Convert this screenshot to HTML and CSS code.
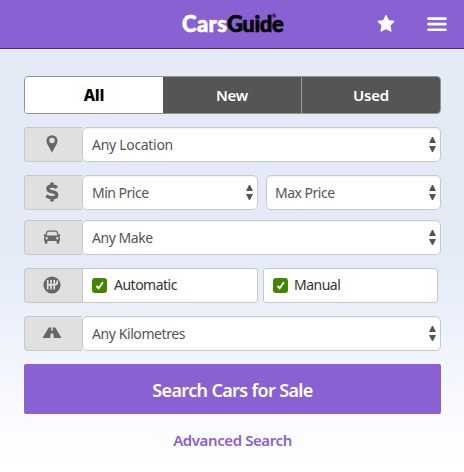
FILE: index.html
```html
<!DOCTYPE html>
<html lang="en">
<head>
<meta charset="utf-8">
<title>CarsGuide</title>
<link rel="stylesheet" href="styles.css">
</head>
<body>
<header class="header">
  <div class="logo"><span class="cars">Cars</span><span class="guide">Guide</span><span class="reg">®</span></div>
  <nav class="actions">
    <svg width="18" height="18" viewBox="0 0 18 18"><path d="M9 .9l2.300 4.900 5.400.7-4 3.700 1.100 5.700L9 13.300l-4.800 2.600 1.100-5.700-4-3.700 5.400-.7z" fill="#fff" stroke="#fff" stroke-width="1.500" stroke-linejoin="round"/></svg>
    <svg width="20" height="16" viewBox="0 0 20 16"><path d="M1.500 2.600h17M1.500 8.100h17M1.500 13.800h17" stroke="#fff" stroke-width="2.600" stroke-linecap="round"/></svg>
  </nav>
</header>
<main class="search">
  <div class="tabs"><div class="tab active"><span>All</span></div><div class="tab"><span>New</span></div><div class="tab"><span>Used</span></div></div>
  <div class="row">
    <div class="icon"><svg width="12" height="18" viewBox="0 0 12 18"><path fill="#666" fill-rule="evenodd" d="M6 .2a5.500 5.500 0 0 1 5.500 5.500C11.500 9 8.500 12 6 17.700 3.500 12 .5 9 .5 5.700A5.500 5.500 0 0 1 6 .2zm0 2.500a2.800 2.800 0 1 0 0 5.600 2.800 2.800 0 0 0 0-5.600z"/></svg></div>
    <div class="select"><span class="t-loc">Any Location</span><i class="arrows"></i></div>
  </div>
  <div class="row">
    <div class="icon"><svg width="16" height="20" viewBox="0 0 16 20"><path d="M13 5.700Q11 4 8 4 3.900 4 3.900 6.700 3.900 8.800 8 9.700 12.700 10.600 12.700 13 12.700 15.800 8 15.800 4.600 15.800 2.300 13.800M8 .5V4M8 15.500v4" fill="none" stroke="#666" stroke-width="3.400"/></svg></div>
    <div class="select min"><span class="t-price">Min Price</span><i class="arrows"></i></div>
    <div class="select max"><span class="t-price">Max Price</span><i class="arrows"></i></div>
  </div>
  <div class="row">
    <div class="icon"><svg width="18" height="14" viewBox="0 0 18 14"><path fill="#666" fill-rule="evenodd" d="M5.200.5h7.600q1.500 0 2 1.500l.9 2.800 1.300-.5.600 1.200-1.300.7q.7.800.7 2V11h-.8v2q0 .8-1.300.8t-1.300-.8v-2H4.400v2q0 .8-1.300.8T1.800 13v-2H1V8.200q0-1.200.7-2L.4 5.500 1 4.300l1.300.5L3.200 2q.5-1.500 2-1.500zM5.300 1.800q-.7 0-.9.700l-.9 3h11l-.9-3q-.2-.7-.9-.7zM3.700 7.100a1.200 1.200 0 1 0 0 2.400 1.200 1.200 0 0 0 0-2.400zm10.600 0a1.200 1.200 0 1 0 0 2.400 1.200 1.200 0 0 0 0-2.400z"/></svg></div>
    <div class="select"><span class="t-make">Any Make</span><i class="arrows"></i></div>
  </div>
  <div class="row">
    <div class="icon"><svg width="18" height="18" viewBox="0 0 18 18"><circle cx="9" cy="9" r="8.600" fill="#666"/><path d="M4.700 4v9.500M8 4v9.500M11.200 4v9.500M4.600 8.800H11q3.300 0 3.300-2.300V4.500" fill="none" stroke="#e0e0e0" stroke-width="1.700"/></svg></div>
    <div class="check auto"><b class="box"><svg width="15" height="15" viewBox="0 0 15 15"><path d="M4.500 8l2.100 2.300 4.300-6" fill="none" stroke="#fff" stroke-width="1.900"/></svg></b><span class="t-auto">Automatic</span></div>
    <div class="check manual"><b class="box"><svg width="15" height="15" viewBox="0 0 15 15"><path d="M4.500 8l2.100 2.300 4.300-6" fill="none" stroke="#fff" stroke-width="1.900"/></svg></b><span class="t-auto">Manual</span></div>
  </div>
  <div class="row">
    <div class="icon"><svg width="20" height="12" viewBox="0 0 20 12"><path fill="#666" d="M6.700.5h2.700L9 3.500h2L10.600.5h2.700L19.500 11H11.800L11.300 6.500H8.700L8.200 11H.5z"/></svg></div>
    <div class="select"><span class="t-km">Any Kilometres</span><i class="arrows"></i></div>
  </div>
  <button class="submit"><span>Search Cars for Sale</span></button>
  <a class="advanced"><span>Advanced Search</span></a>
</main>
</body>
</html>
```
FILE: styles.css
```css
* { box-sizing: border-box; }
body { margin: 0; height: 472px; overflow: hidden; background: #e4ebf7; font-family: "Noto Sans", sans-serif; font-size: 14px; color: #555; }
svg { display: block; flex: none; }
span { white-space: nowrap; }
.header { height: 49px; background: #8961d2; border-bottom: 1px solid #47306f; display: flex; align-items: center; justify-content: space-between; padding: 0 17px 0 182px; }
.logo { display: flex; font: 900 22px/30px Lato, sans-serif; color: #fff; -webkit-text-stroke: .6px; }
.cars { width: 45px; letter-spacing: .4px; }
.guide { width: 56px; color: #000; letter-spacing: -.4px; }
.reg { width: 0; margin-left: -11px; color: #000; font-size: 5px; line-height: 15px; -webkit-text-stroke: 0; }
.actions { display: flex; gap: 32px; align-items: center; }
.search { height: 423px; padding: 27px 23px 0 24px; background: linear-gradient(#e4ebf7 50%, #f0f4fd 72%, #fdfdff 92%, #fff); }
.tabs { display: flex; height: 38px; margin-bottom: 13px; border: 1px solid #929292; border-radius: 4px; overflow: hidden; }
.tab { flex: 1; background: #555; color: #fff; font-size: 15px; font-weight: 600; line-height: 37px; text-align: center; letter-spacing: -.2px; }
.tab + .tab + .tab { border-left: 1px solid #999; }
.active { background: #fff; color: #000; font-size: 16px; font-weight: 800; letter-spacing: -.2px; }
.row { display: flex; height: 35px; margin-bottom: 13px; }
.row:nth-child(3) { margin-bottom: 10px; }
.icon { width: 58px; height: 35px; flex: none; display: flex; align-items: center; justify-content: center; padding: 0 4px 1px 0; background: #e0e0e0; border: 1px solid #c8c8c8; border-right: 0; border-radius: 4px 0 0 4px; }
.select, .check { display: flex; align-items: center; height: 35px; background: #fff; border: 1px solid #c8c8c8; }
.select { flex: 1; justify-content: space-between; border-radius: 5px; padding: 0 4px 0 9px; box-shadow: inset 0 1px 1px #0000000d; }
.select span { margin-top: -1px; }
.t-loc { letter-spacing: -.3px; }
.t-price { letter-spacing: -.5px; }
.t-make { letter-spacing: -.45px; }
.t-km { letter-spacing: -.42px; }
.t-auto { letter-spacing: -.5px; }
.min { flex: none; width: 176px; margin-right: 8px; }
.max { padding-left: 8px; }
.arrows { width: 7px; height: 15px; display: flex; flex-direction: column; justify-content: space-between; }
.arrows::before, .arrows::after { content: ""; border: 3.500px solid transparent; }
.arrows::before { border-top: 0; border-bottom: 6px solid #555; }
.arrows::after { border-bottom: 0; border-top: 6px solid #555; }
.check { width: 176px; padding: 0 9px; color: #333; border-radius: 0 3px 3px 0; }
.check span { margin: -3px 0 0 7px; }
.manual { width: 175px; margin-left: 5px; border-radius: 3px; }
.manual span { margin-left: 6px; }
.box { width: 15px; height: 15px; background: #448500; border-radius: 3px; }
.submit { display: block; width: 417px; height: 50px; border: 0; padding: 2px 0 0; background: #8961d2; border-radius: 2px; color: #fff; font: 600 18px "Noto Sans", sans-serif; letter-spacing: -.65px; }
.advanced { display: block; text-align: center; color: #8961d2; font-size: 15px; font-weight: 600; line-height: 22px; margin-top: 15px; letter-spacing: -.4px; }
```
